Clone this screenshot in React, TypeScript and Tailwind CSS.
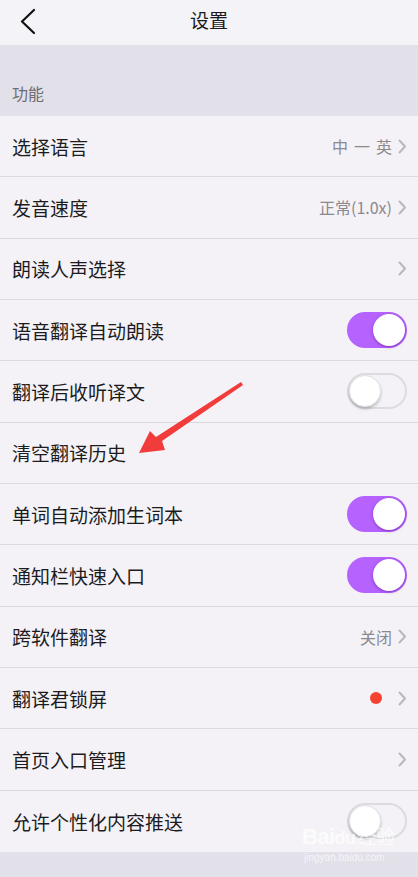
import React from "react";

const font = { fontFamily: '"Noto Sans CJK SC", "Noto Sans", sans-serif' };

function Chevron() {
  return (
    <svg width="9" height="15" viewBox="0 0 9 15" className="shrink-0">
      <path d="M1.5 1.5 L7 7.5 L1.5 13.5" fill="none" stroke="#b8b7bd" strokeWidth="2" strokeLinecap="round" strokeLinejoin="round" />
    </svg>
  );
}

function Toggle({ on }: { on: boolean }) {
  if (on) {
    return (
      <div className="w-[60px] h-[36px] rounded-full bg-[#b662fe] flex items-center justify-end p-[2px]">
        <div className="w-[32px] h-[32px] rounded-full bg-white shadow-[0_1px_3px_rgba(60,0,110,0.45)]" />
      </div>
    );
  }
  return (
    <div className="w-[60px] h-[36px] rounded-full bg-[#f4f2f6] border-2 border-[#dcdbe0] flex items-center justify-start">
      <div className="w-[32px] h-[32px] rounded-full bg-white border border-[#e2e1e5] shadow-[0_2px_3px_rgba(0,0,0,0.22)]" />
    </div>
  );
}

type Row = {
  label: string;
  value?: string[];
  chevron?: boolean;
  toggle?: boolean;
  dot?: boolean;
};

const rows: Row[] = [
  { label: "选择语言", value: ["中", "一", "英"], chevron: true },
  { label: "发音速度", value: ["正常(1.0x)"], chevron: true },
  { label: "朗读人声选择", chevron: true },
  { label: "语音翻译自动朗读", toggle: true },
  { label: "翻译后收听译文", toggle: false },
  { label: "清空翻译历史" },
  { label: "单词自动添加生词本", toggle: true },
  { label: "通知栏快速入口", toggle: true },
  { label: "跨软件翻译", value: ["关闭"], chevron: true },
  { label: "翻译君锁屏", dot: true, chevron: true },
  { label: "首页入口管理", chevron: true },
  { label: "允许个性化内容推送", toggle: false },
];

export default function App() {
  return (
    <div className="relative w-[418px] h-[877px] overflow-hidden bg-[#e2e0e9]" style={font}>
      {/* Header */}
      <div className="h-[45px] bg-[#f4f3f7] flex items-center relative">
        <div className="w-[60px] h-full flex items-center pl-[19px] pb-[2px]">
          <svg width="18" height="28" viewBox="0 0 18 28">
            <path d="M15 2 L3 13.5 L15 25" fill="none" stroke="#111" strokeWidth="2.2" strokeLinecap="round" strokeLinejoin="round" />
          </svg>
        </div>
        <div className="flex-1 text-center text-[19px] text-[#1a1a1a] pr-[60px] pb-[4px]">设置</div>
      </div>

      {/* Section header */}
      <div className="h-[71px] bg-[#e2e0e9] flex items-end pb-[15px] pl-[12px]">
        <span className="text-[16px] text-[#6d6c72] leading-none">功能</span>
      </div>

      {/* Rows */}
      <div className="flex flex-col">
        {rows.map((r, i) => (
          <div
            key={i}
            className={
              "h-[61.33px] bg-[#f4f2f6] flex items-center pl-[12px] pr-[11px] " +
              (i < rows.length - 1 ? "border-b border-[#dcdae1]" : "")
            }
          >
            <span className="flex-1 text-[19px] text-[#1c1c1e] leading-none">{r.label}</span>
            {r.value && (
              <span className="flex gap-[6px] text-[16px] text-[#8a898f] leading-none mr-[6px]">
                {r.value.map((v, j) => (
                  <span key={j}>{v}</span>
                ))}
              </span>
            )}
            {r.dot && <span className="w-[12px] h-[12px] rounded-full bg-[#f5432f] mr-[16px]" />}
            {r.chevron && <Chevron />}
            {r.toggle !== undefined && <Toggle on={r.toggle} />}
          </div>
        ))}
      </div>

      {/* Red annotation arrow */}
      <svg className="absolute left-0 top-0 pointer-events-none" width="418" height="877" viewBox="0 0 418 877">
        <path
          d="M241 382 L243 385 L162 441 L165 450 L139 453 L150 431 L156 437 Z"
          fill="#f23b3b"
        />
      </svg>

      {/* Watermark */}
      <div className="absolute left-[302px] top-[826px] text-white/75 pointer-events-none leading-none">
        <div className="text-[22px] font-bold tracking-tight" style={{ fontFamily: '"Liberation Sans", sans-serif' }}>
          Bai<span className="text-[18px]">du</span>
          <span className="text-[19px] font-normal ml-[2px]" style={font}>经验</span>
        </div>
        <div className="text-[10px] mt-[5px] ml-[2px] text-white/70" style={{ fontFamily: '"Liberation Sans", sans-serif' }}>
          jingyan.baidu.com
        </div>
      </div>
    </div>
  );
}
